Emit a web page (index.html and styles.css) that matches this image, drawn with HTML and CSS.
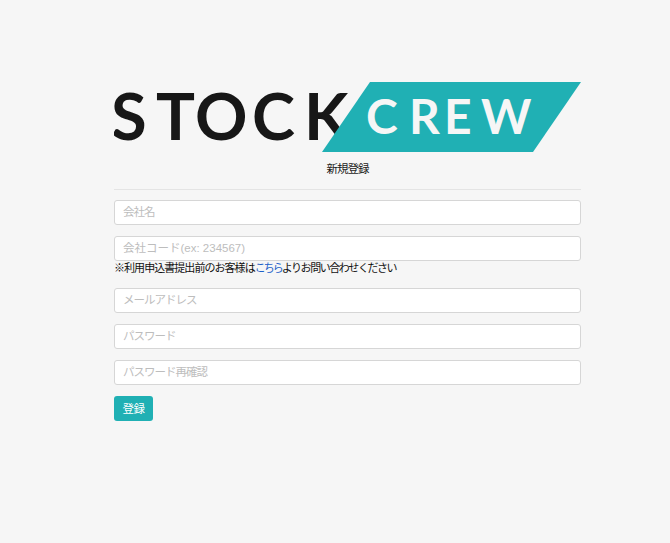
FILE: index.html
```html
<!DOCTYPE html>
<html lang="ja">
<head>
<meta charset="utf-8">
<title>新規登録</title>
<link rel="stylesheet" href="styles.css">
</head>
<body>
<main class="panel">
  <svg class="logo" viewBox="0 0 467 70" role="img" aria-label="STOCK CREW">
    <text class="logo-stock" x="-3 42 81 138 190" y="58">STOCK</text>
    <polygon class="logo-band" points="256,0 467,0 419,70 208,70"/>
    <text class="logo-crew" x="252 295 330 367" y="52">CREW</text>
  </svg>
  <h1 class="title">新規登録</h1>
  <hr class="rule">
  <form class="form">
    <input class="field" type="text" placeholder="会社名">
    <div class="group">
      <input class="field field-code" type="text" placeholder="会社コード(ex: 234567)">
      <p class="note"><span class="note-lead">※利用申込書提出前のお客様は</span><a href="#">こちら</a>よりお問い合わせください</p>
    </div>
    <input class="field" type="email" placeholder="メールアドレス">
    <input class="field" type="password" placeholder="パスワード">
    <input class="field" type="password" placeholder="パスワード再確認">
    <button class="submit" type="button">登録</button>
  </form>
</main>
</body>
</html>
```
FILE: styles.css
```css
* { box-sizing: border-box; }
html, body { margin: 0; height: 100%; }
body {
  background: #f6f6f6;
  color: #1a1a1a;
  font-family: "Liberation Sans", "Noto Sans CJK JP", sans-serif;
  font-size: 11px;
}
.panel {
  width: 467px;
  margin-left: 114px;
  padding-top: 82px;
}
.logo { display: block; width: 467px; height: 70px; }
.logo-stock {
  font-family: Lato, sans-serif;
  font-weight: 700;
  font-size: 65px;
  fill: #171717;
}
.logo-band { fill: #20b0b4; }
.logo-crew {
  font-family: Lato, sans-serif;
  font-weight: 700;
  font-size: 48px;
  fill: #f6f6f6;
}
.title {
  margin: 8px 0 0;
  height: 18px;
  font-size: 11.5px;
  font-weight: 400;
  letter-spacing: -1px;
  line-height: 18px;
  text-align: center;
}
.rule {
  margin: 11px 0 10px;
  border: 0;
  border-top: 1px solid #e4e4e4;
}
.form { display: flex; flex-direction: column; gap: 11px; }
.group { display: flex; flex-direction: column; }
.field {
  display: block;
  width: 100%;
  height: 25px;
  padding: 0 8px 2px;
  background: #fff;
  border: 1px solid #d6d6d6;
  border-radius: 3px;
  font-family: "Liberation Sans", "Noto Sans CJK JP", sans-serif;
  font-size: 11.5px;
  letter-spacing: -1px;
}
.field::placeholder { color: #bdbdbd; opacity: 1; }
.field-code { letter-spacing: 0; }
.note {
  margin: 0;
  height: 16px;
  font-size: 11px;
  letter-spacing: -1.45px;
  line-height: 14px;
  color: #111;
}
.note-lead { letter-spacing: -0.95px; }
.note a { color: #1d5fc9; text-decoration: none; letter-spacing: -2px; }
.submit {
  align-self: flex-start;
  width: 39px;
  height: 25px;
  padding: 0 0 1px;
  background: #20b0b4;
  border: 0;
  border-radius: 3px;
  color: #fff;
  font-family: "Liberation Sans", "Noto Sans CJK JP", sans-serif;
  font-size: 11.5px;
  letter-spacing: -0.5px;
}
```
